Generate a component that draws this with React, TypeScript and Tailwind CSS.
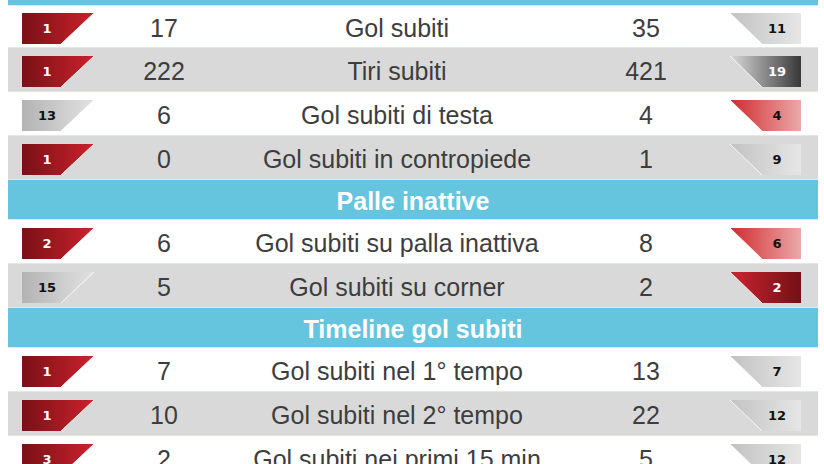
import { useId } from 'react'

type Tone = 'red' | 'gray' | 'light' | 'dark' | 'pink' | 'deep'

interface Badge {
  n: string
  tone: Tone
}

type Row =
  | { kind: 'head'; title: string }
  | { kind: 'stat'; left: Badge; a: string; label: string; b: string; right: Badge }

const tones: Record<Tone, { from: string; to: string; text: string }> = {
  red: { from: '#7a1016', to: '#cb222d', text: 'text-white' },
  gray: { from: '#b3b3b3', to: '#e2e2e2', text: 'text-[#111]' },
  light: { from: '#c2c2c2', to: '#e6e6e6', text: 'text-[#111]' },
  dark: { from: '#dadada', to: '#383838', text: 'text-white' },
  pink: { from: '#d12a2c', to: '#eaa9a9', text: 'text-[#111]' },
  deep: { from: '#cd2430', to: '#741016', text: 'text-white' },
}

const rows: Row[] = [
  { kind: 'stat', left: { n: '1', tone: 'red' }, a: '17', label: 'Gol subiti', b: '35', right: { n: '11', tone: 'light' } },
  { kind: 'stat', left: { n: '1', tone: 'red' }, a: '222', label: 'Tiri subiti', b: '421', right: { n: '19', tone: 'dark' } },
  { kind: 'stat', left: { n: '13', tone: 'gray' }, a: '6', label: 'Gol subiti di testa', b: '4', right: { n: '4', tone: 'pink' } },
  { kind: 'stat', left: { n: '1', tone: 'red' }, a: '0', label: 'Gol subiti in contropiede', b: '1', right: { n: '9', tone: 'light' } },
  { kind: 'head', title: 'Palle inattive' },
  { kind: 'stat', left: { n: '2', tone: 'red' }, a: '6', label: 'Gol subiti su palla inattiva', b: '8', right: { n: '6', tone: 'pink' } },
  { kind: 'stat', left: { n: '15', tone: 'gray' }, a: '5', label: 'Gol subiti su corner', b: '2', right: { n: '2', tone: 'deep' } },
  { kind: 'head', title: 'Timeline gol subiti' },
  { kind: 'stat', left: { n: '1', tone: 'red' }, a: '7', label: 'Gol subiti nel 1° tempo', b: '13', right: { n: '7', tone: 'light' } },
  { kind: 'stat', left: { n: '1', tone: 'red' }, a: '10', label: 'Gol subiti nel 2° tempo', b: '22', right: { n: '12', tone: 'light' } },
  { kind: 'stat', left: { n: '3', tone: 'red' }, a: '2', label: 'Gol subiti nei primi 15 min', b: '5', right: { n: '12', tone: 'light' } },
]

function RankBadge({ badge, side }: { badge: Badge; side: 'left' | 'right' }) {
  const id = useId()
  const t = tones[badge.tone]
  const left = side === 'left'
  return (
    <div className="relative w-[72px] h-[31px] mt-1">
      <svg className="absolute inset-0" width="72" height="31" viewBox="0 0 72 31">
        <defs>
          <linearGradient id={id} x1="0" x2="1" y1="0" y2="0">
            <stop offset="0" stopColor={t.from} />
            <stop offset="1" stopColor={t.to} />
          </linearGradient>
        </defs>
        {left ? (
          <>
            <polygon points="0,0 72,0 39,31 0,31" fill={`url(#${id})`} />
            <line x1="72" y1="0" x2="39" y2="31" stroke="#fff" strokeOpacity="0.85" strokeWidth="1" />
          </>
        ) : (
          <>
            <polygon points="0,0 71,0 71,31 32,31" fill={`url(#${id})`} />
            <line x1="0" y1="0" x2="32" y2="31" stroke="#fff" strokeOpacity="0.85" strokeWidth="1" />
          </>
        )}
      </svg>
      <div className={`relative flex h-full items-center ${left ? '' : 'pl-[22px]'}`}>
        <span
          className={`w-[50px] text-center text-[13px] font-bold ${t.text}`}
          style={{ fontFamily: '"DejaVu Sans", Verdana, sans-serif' }}
        >
          {badge.n}
        </span>
      </div>
    </div>
  )
}

export default function App() {
  let stripe = 0
  return (
    <div
      className="h-[464px] w-[824px] overflow-hidden bg-white text-[#3d3d3d]"
      style={{ fontFamily: '"Liberation Sans", Arial, sans-serif' }}
    >
      <div className="ml-2 w-[810px]">
        {/* top bar of the previous section */}
        <div className="h-[6px] bg-[#65c5de] border-b border-[#ece6da]" />

        {rows.map((row, i) => {
          if (row.kind === 'head') {
            stripe = 0
            return (
              <div
                key={i}
                className="h-10 flex items-center justify-center pt-1 bg-[#65c5de] border-b border-[#ece6da] text-white font-bold text-[25px]"
              >
                {row.title}
              </div>
            )
          }
          const grey = stripe % 2 === 1
          stripe++
          return (
            <div
              key={i}
              className={`grid grid-cols-[102px_108px_358px_140px_102px] items-center border-b border-[#ece6da] text-[25px] ${
                i === 0 ? 'h-[42px]' : 'h-11'
              } ${grey ? 'bg-[#d9d9d9]' : 'bg-white'}`}
            >
              <div className="pl-[14px]">
                <RankBadge badge={row.left} side="left" />
              </div>
              <div className="text-center pt-[4px]">{row.a}</div>
              <div className="text-center whitespace-nowrap pt-[4px]">{row.label}</div>
              <div className="text-center pt-[4px]">{row.b}</div>
              <div className="pl-[14px]">
                <RankBadge badge={row.right} side="right" />
              </div>
            </div>
          )
        })}
      </div>
    </div>
  )
}
